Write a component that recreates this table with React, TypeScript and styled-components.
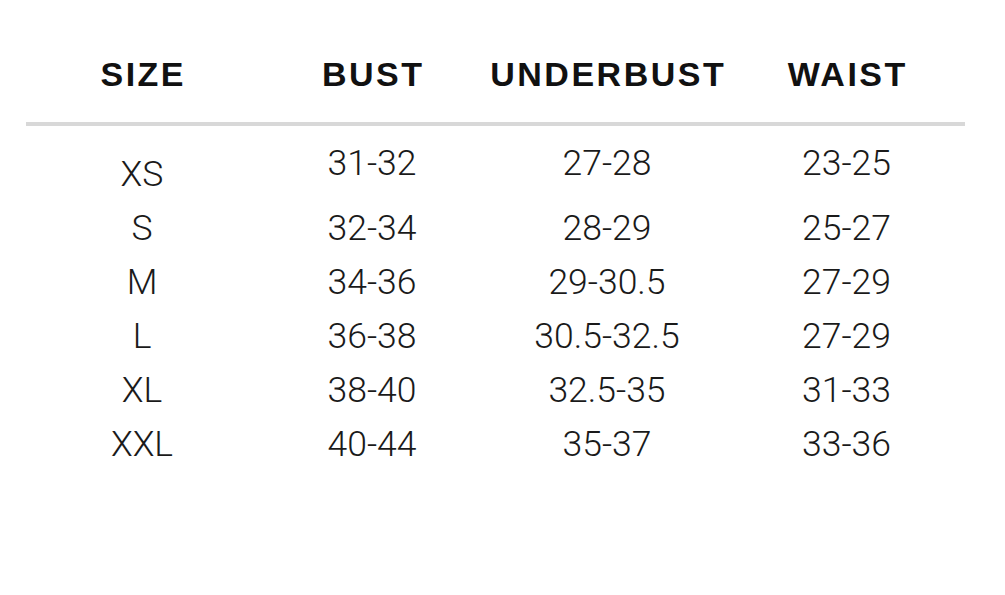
import React from "react";
import styled, { createGlobalStyle } from "styled-components";

const Global = createGlobalStyle`
  html, body { margin: 0; padding: 0; background: #ffffff; }
  body { width: 1005px; height: 595px; overflow: hidden; }
`;

const Page = styled.div`
  padding: 54px 0 0 26px;
  width: 939px;
`;

const Grid = styled.div`
  display: grid;
  grid-template-columns: 232px 228px 242px 237px;
  align-items: start;
`;

const HeaderRow = styled(Grid)`
  height: 40px;
`;

const HeadCell = styled.div`
  font-family: "Liberation Sans", Arial, sans-serif;
  font-weight: 700;
  font-size: 34px;
  line-height: 40px;
  letter-spacing: 2.5px;
  color: #111111;
  text-align: center;
  text-indent: 2.5px;
`;

const Rule = styled.div`
  margin-top: 28px;
  height: 4px;
  background: #d8d8d8;
`;

const Body = styled.div`
  margin-top: 10px;
`;

const Row = styled(Grid)``;

const Cell = styled.div<{ $drop?: number }>`
  font-family: Roboto, "Liberation Sans", sans-serif;
  font-weight: 300;
  font-size: 35.5px;
  line-height: 54px;
  color: #1a1a1a;
  text-align: center;
  padding-top: ${(p) => p.$drop ?? 0}px;
`;

const headers = ["SIZE", "BUST", "UNDERBUST", "WAIST"];

const rows: string[][] = [
  ["XS", "31-32", "27-28", "23-25"],
  ["S", "32-34", "28-29", "25-27"],
  ["M", "34-36", "29-30.5", "27-29"],
  ["L", "36-38", "30.5-32.5", "27-29"],
  ["XL", "38-40", "32.5-35", "31-33"],
  ["XXL", "40-44", "35-37", "33-36"],
];

export default function App() {
  return (
    <>
      <Global />
      <Page>
        <HeaderRow>
          {headers.map((h) => (
            <HeadCell key={h}>{h}</HeadCell>
          ))}
        </HeaderRow>
        <Rule />
        <Body>
          {rows.map((r, i) => (
            <Row key={r[0]}>
              {r.map((c, j) => (
                <Cell key={j} $drop={i === 0 && j === 0 ? 11 : 0}>
                  {c}
                </Cell>
              ))}
            </Row>
          ))}
        </Body>
      </Page>
    </>
  );
}
